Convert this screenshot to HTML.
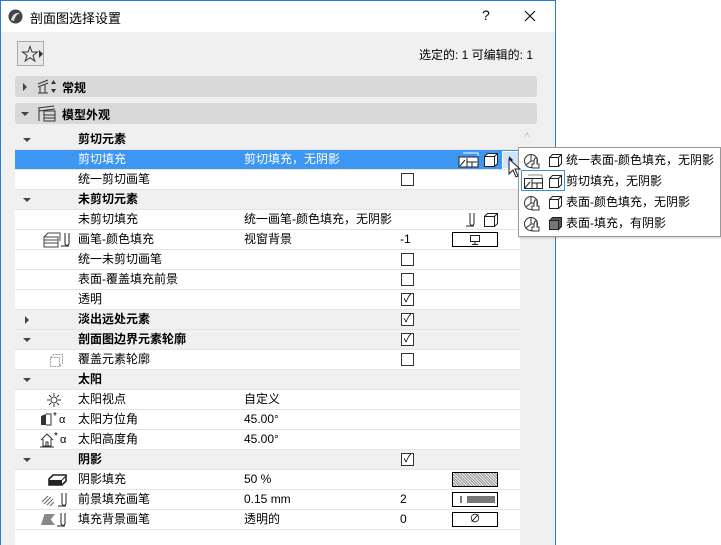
<!DOCTYPE html>
<html><head><meta charset="utf-8"><style>
*{margin:0;padding:0;box-sizing:border-box}
body{width:721px;height:545px;background:#fff;font-family:"Liberation Sans","Noto Sans CJK SC",sans-serif;font-size:12px;color:#000;position:relative;overflow:hidden}
.abs{position:absolute}
#win{left:0;top:0;width:556px;height:545px;border:1px solid #2b7bd0;border-bottom:none;background:#f0f0f0}
#title{left:0;top:0;width:554px;height:31px;background:#fff}
.bar{position:absolute;left:15px;width:522px;height:21px;background:#d9d9d9;border-radius:3px}
.row{position:absolute;left:15px;width:505px;height:20px;background:#fff;border-bottom:1px solid #e4e4e4;line-height:18px}
.row.h{background:#f0f0f0;font-weight:bold}
.row .l{position:absolute;left:63px;top:0;white-space:nowrap}
.row .v{position:absolute;left:229px;top:0;white-space:nowrap}
.row .n{position:absolute;left:385px;top:0}
.tri{position:absolute;left:8px;top:8px;width:0;height:0;border-left:4px solid transparent;border-right:4px solid transparent;border-top:4px solid #444}
.trir{position:absolute;left:10px;top:6px;width:0;height:0;border-top:4px solid transparent;border-bottom:4px solid transparent;border-left:4px solid #444}
.cb{position:absolute;left:386px;top:3px;width:13px;height:13px;border:1px solid #333;background:#fff;font-size:11px;line-height:11px;text-align:center;font-weight:normal}
.sw{position:absolute;left:437px;top:2px;width:46px;height:15px;border:1px solid #000;background:#fff}
.sel{background:#3c96f2!important;color:#fff}
.pop{position:absolute;left:47px;line-height:16px}
</style></head><body>
<div id="win" class="abs"></div>
<div id="title" class="abs" style="left:1px;top:1px">
  <svg class="abs" style="left:7px;top:8px" width="15" height="15"><circle cx="7.5" cy="7.5" r="7" fill="#444"/><path d="M3 11 Q5 3 12 4 Q7 6 6 12Z" fill="#ddd"/></svg>
  <div class="abs" style="left:29px;top:7px;font-size:13px">剖面图选择设置</div>
  <div class="abs" style="left:481px;top:6px;font-size:14px">?</div>
  <svg class="abs" style="left:523px;top:9px" width="12" height="12"><path d="M1 1L11 11M11 1L1 11" stroke="#111" stroke-width="1.2"/></svg>
</div>
<div class="abs" style="left:17px;top:41px;width:27px;height:25px;border:1px solid #aaa;background:#e8e8e8">
  <svg class="abs" style="left:3px;top:3px" width="18" height="18"><path d="M9 1.5L11 7H16.5L12 10.5L13.8 16L9 12.7L4.2 16L6 10.5L1.5 7H7Z" fill="none" stroke="#333"/></svg>
  <div class="abs" style="left:21px;top:8px;border-top:4px solid transparent;border-bottom:4px solid transparent;border-left:4px solid #333"></div>
</div>
<div class="abs" style="left:419px;top:46px">选定的: 1 可编辑的: 1</div>
<div class="bar" style="top:76px"><div class="trir" style="left:8px;top:7px"></div>
<svg class="abs" style="left:21px;top:2px" width="22" height="17"><path d="M2 6L12 2M2 9L12 5M4 9V15M9 7V15M2 15H12" stroke="#333" fill="none"/><path d="M15 6L17.5 2L20 6ZM15 11L17.5 15L20 11Z" fill="#333"/></svg>
<div class="abs" style="left:47px;top:3px;font-weight:bold">常规</div></div>
<div class="bar" style="top:103px"><div class="tri" style="left:6px;top:9px"></div>
<svg class="abs" style="left:21px;top:2px" width="22" height="17"><path d="M2 3L18 1M3 6L19 4M3 3V16M8 6H19V16H8ZM8 10H19M8 13H19" stroke="#333" fill="none"/></svg>
<div class="abs" style="left:47px;top:3px;font-weight:bold">模型外观</div></div>

<div class="abs" style="left:15px;top:130px;width:505px;height:415px;background:#fff"></div>
<div class="abs" style="left:520px;top:130px;width:17px;height:415px;background:#f0f0f0"></div>
<div class="abs" style="left:524px;top:130px;color:#bbb;font-size:10px">˄</div>

<div class="row h" style="top:130px"><div class="tri"></div><div class="l">剪切元素</div></div>
<div class="row sel" style="top:150px"><div class="l">剪切填充</div><div class="v">剪切填充，无阴影</div>
  <svg class="abs" style="left:443px;top:2px" width="22" height="16"><path d="M5 1H20V4" stroke="#fff" fill="none"/><rect x="1" y="5" width="19" height="10" fill="#fff" stroke="#222"/><path d="M2 14L7 8M9 6V15M9 10H19M14 10V15" stroke="#222"/></svg>
  <svg class="abs" style="left:468px;top:2px" width="16" height="16"><path d="M1.5 4.5H11.5V14.5H1.5ZM1.5 4.5L4.5 1.5H14.5V11.5L11.5 14.5M11.5 4.5L14.5 1.5" fill="#fff" stroke="#222"/></svg>
  <div class="abs" style="left:487px;top:1px;width:17px;height:18px;border:1px solid #fff;background:#cde4fb"><div class="abs" style="left:6px;top:4px;border-top:4px solid transparent;border-bottom:4px solid transparent;border-left:4px solid #222"></div></div>
</div>
<div class="row" style="top:170px"><div class="l">统一剪切画笔</div><div class="cb"></div></div>
<div class="row h" style="top:190px"><div class="tri"></div><div class="l">未剪切元素</div></div>
<div class="row" style="top:210px"><div class="l">未剪切填充</div><div class="v">统一画笔-颜色填充，无阴影</div>
<svg class="abs" style="left:450px;top:2px" width="14" height="16"><path d="M1 14H9M5 1V12L7 14L9 12V1" stroke="#222" fill="none"/></svg>
<svg class="abs" style="left:468px;top:2px" width="16" height="16"><path d="M1.5 4.5H11.5V14.5H1.5ZM1.5 4.5L4.5 1.5H14.5V11.5L11.5 14.5M11.5 4.5L14.5 1.5" fill="#fff" stroke="#222"/></svg></div>
<div class="row" style="top:230px">
<svg class="abs" style="left:27px;top:2px" width="32" height="16"><path d="M2 5L6 1H18V9M2 5H16V15H2ZM2 8H16M2 11H16" stroke="#444" fill="none"/><path d="M19 14H27M23 1V12L25 14L27 12V1" stroke="#222" fill="none"/></svg>
<div class="l">画笔-颜色填充</div><div class="v">视窗背景</div><div class="n">-1</div><div class="sw"><svg class="abs" style="left:16px;top:1px" width="12" height="12"><rect x="1.5" y="1.5" width="9" height="6" fill="none" stroke="#222"/><path d="M6 8V10M3 10.5H9" stroke="#222"/></svg></div></div>
<div class="row" style="top:250px"><div class="l">统一未剪切画笔</div><div class="cb"></div></div>
<div class="row" style="top:270px"><div class="l">表面-覆盖填充前景</div><div class="cb"></div></div>
<div class="row" style="top:290px"><div class="l">透明</div><div class="cb">✓</div></div>
<div class="row h" style="top:310px"><div class="trir"></div><div class="l">淡出远处元素</div><div class="cb">✓</div></div>
<div class="row h" style="top:330px"><div class="tri"></div><div class="l">剖面图边界元素轮廓</div><div class="cb">✓</div></div>
<div class="row" style="top:350px"><svg class="abs" style="left:33px;top:2px" width="16" height="16"><path d="M2.5 5.5H11.5V14.5H2.5ZM2.5 5.5L5.5 2.5H14.5V11.5L11.5 14.5" fill="none" stroke="#999" stroke-dasharray="2 1"/></svg><div class="l">覆盖元素轮廓</div><div class="cb"></div></div>
<div class="row h" style="top:370px"><div class="tri"></div><div class="l">太阳</div></div>
<div class="row" style="top:390px"><svg class="abs" style="left:32px;top:3px" width="14" height="14"><circle cx="7" cy="7" r="3" fill="none" stroke="#333"/><path d="M7 0V3M7 11V14M0 7H3M11 7H14M2 2L4 4M10 10L12 12M12 2L10 4M2 12L4 10" stroke="#333"/></svg><div class="l">太阳视点</div><div class="v">自定义</div></div>
<div class="row" style="top:410px"><svg class="abs" style="left:25px;top:2px" width="12" height="14"><path d="M1 4L6 2V13L1 13Z" fill="#333"/><path d="M6 2H11V13H6" fill="none" stroke="#333"/></svg><div class="abs" style="left:38px;top:-2px;font-size:10px">*</div><div class="abs" style="left:44px;top:1px;font-size:11px">α</div><div class="l">太阳方位角</div><div class="v">45.00°</div></div>
<div class="row" style="top:430px"><svg class="abs" style="left:25px;top:2px" width="14" height="16"><path d="M1 8L7 2L13 8M3 7V14H11V7M6 14V10H8V14M0 15H14" fill="none" stroke="#333"/></svg><div class="abs" style="left:39px;top:-2px;font-size:10px">*</div><div class="abs" style="left:45px;top:1px;font-size:11px">α</div><div class="l">太阳高度角</div><div class="v">45.00°</div></div>
<div class="row h" style="top:450px"><div class="tri"></div><div class="l">阴影</div><div class="cb">✓</div></div>
<div class="row" style="top:470px"><svg class="abs" style="left:32px;top:2px" width="22" height="16"><path d="M2 7L6 3H19V9L15 13H2Z" fill="#fff" stroke="#222" stroke-width="1.6"/><path d="M2 8H15V13H2Z" fill="#222"/><path d="M15 8L19 4" stroke="#222"/></svg><div class="l">阴影填充</div><div class="v">50 %</div><div class="sw" style="background:repeating-linear-gradient(45deg,#999 0 1px,#eee 1px 2px)"></div></div>
<div class="row" style="top:490px"><svg class="abs" style="left:26px;top:2px" width="34" height="16"><path d="M1 10L7 4M3 12L10 5M6 13L12 7M9 14L13 10" stroke="#666"/><path d="M17 14H25M21 1V12L23 14L25 12V1" stroke="#222" fill="none"/></svg><div class="l">前景填充画笔</div><div class="v">0.15 mm</div><div class="n">2</div><div class="sw"><div class="abs" style="left:7px;top:3px;width:2px;height:7px;background:#777"></div><div class="abs" style="left:14px;top:3px;width:28px;height:7px;background:#777"></div></div></div>
<div class="row" style="top:510px"><div class="abs" style="left:26px;top:4px;width:14px;height:11px;background:#888;clip-path:polygon(25% 0,100% 0,70% 50%,100% 100%,0 100%)"></div><svg class="abs" style="left:41px;top:2px" width="12" height="16"><path d="M1 14H9M5 1V12L7 14L9 12V1" stroke="#222" fill="none"/></svg><div class="l">填充背景画笔</div><div class="v">透明的</div><div class="n">0</div><div class="sw" style="text-align:center;font-size:11px;line-height:13px">∅</div></div>

<div class="abs" style="left:518px;top:147px;width:203px;height:90px;background:#fff;border:1px solid #999;box-shadow:1px 1px 2px rgba(0,0,0,.2)">
  <svg class="abs" style="left:4px;top:4px" width="44" height="80">
    <defs><g id="pie"><circle cx="8" cy="8" r="6.5" fill="none" stroke="#333"/><path d="M8 1.5V8L3 12M8 8H11" stroke="#333" fill="none"/><path d="M11 8V11H9V15H16V11H14V5H12Z" fill="#fff" stroke="#333"/></g>
    <g id="cube"><path d="M1.5 4.5H10.5V13.5H1.5ZM1.5 4.5L4.5 1.5H13.5V10.5L10.5 13.5M10.5 4.5L13.5 1.5" fill="#fff" stroke="#222"/></g></defs>
    <use href="#pie" x="0" y="1"/><use href="#cube" x="25" y="1"/>
    <path d="M5 23H19V26" stroke="#888" fill="none"/><rect x="1.5" y="26.5" width="18" height="10" fill="#fff" stroke="#222"/><path d="M2 36L7 30M9 27V36M9 31H19M14 31V36" stroke="#222"/><use href="#cube" x="25" y="22"/>
    <use href="#pie" x="0" y="43"/><use href="#cube" x="25" y="43"/>
    <use href="#pie" x="0" y="64"/><path d="M26.5 68.5H35.5V77.5H26.5Z" fill="#777" stroke="#222"/><path d="M26.5 68.5L29.5 65.5H38.5V74.5L35.5 77.5V68.5Z" fill="#555" stroke="#222"/>
  </svg>
  <div class="abs" style="left:2px;top:22px;width:44px;height:21px;border:1px solid #3c8fe0"></div>
  <div class="pop" style="top:4px">统一表面-颜色填充，无阴影</div>
  <div class="pop" style="top:25px">剪切填充，无阴影</div>
  <div class="pop" style="top:46px">表面-颜色填充，无阴影</div>
  <div class="pop" style="top:67px">表面-填充，有阴影</div>
</div>
<svg class="abs" style="left:508px;top:158px" width="14" height="22"><path d="M1 1V16L5 12L8 19L10 18L7 11H12Z" fill="#fff" stroke="#222"/></svg>
</body></html>
